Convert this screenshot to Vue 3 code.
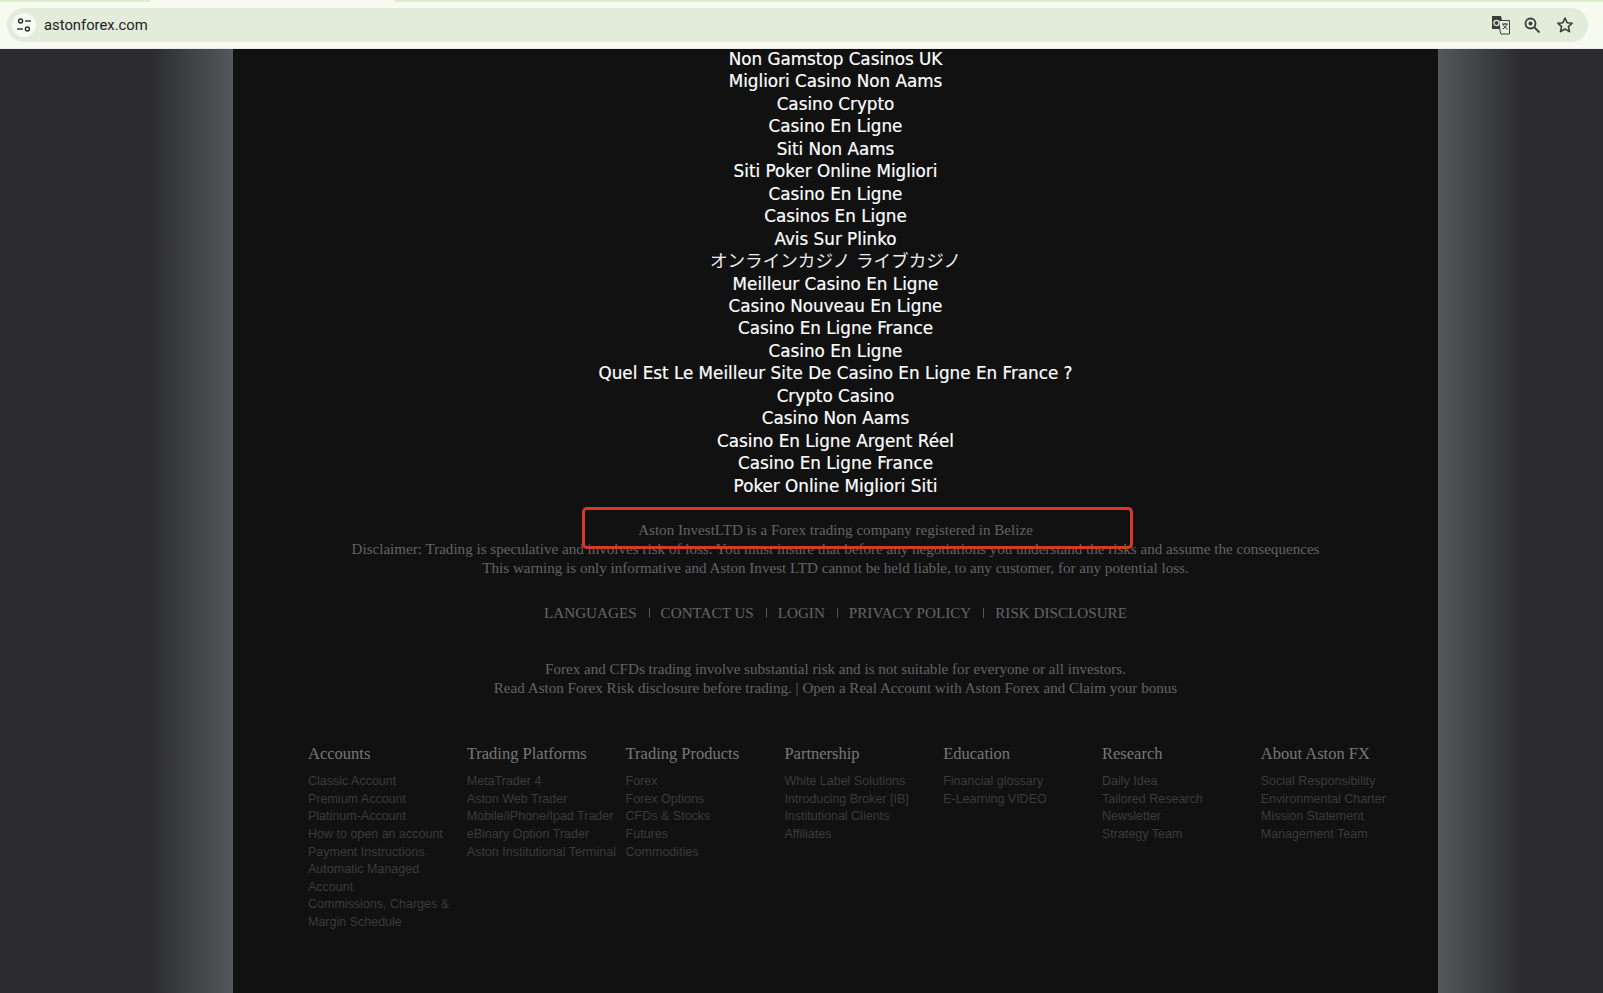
<script setup>
const casinoLinks = [
  'Non Gamstop Casinos UK',
  'Migliori Casino Non Aams',
  'Casino Crypto',
  'Casino En Ligne',
  'Siti Non Aams',
  'Siti Poker Online Migliori',
  'Casino En Ligne',
  'Casinos En Ligne',
  'Avis Sur Plinko',
  'オンラインカジノ ライブカジノ',
  'Meilleur Casino En Ligne',
  'Casino Nouveau En Ligne',
  'Casino En Ligne France',
  'Casino En Ligne',
  'Quel Est Le Meilleur Site De Casino En Ligne En France ?',
  'Crypto Casino',
  'Casino Non Aams',
  'Casino En Ligne Argent Réel',
  'Casino En Ligne France',
  'Poker Online Migliori Siti',
]

const navLinks = ['LANGUAGES', 'CONTACT US', 'LOGIN', 'PRIVACY POLICY', 'RISK DISCLOSURE']

const columns = [
  {
    title: 'Accounts',
    items: [
      'Classic Account',
      'Premium Account',
      'Platinum-Account',
      'How to open an account',
      'Payment Instructions',
      'Automatic Managed Account',
      'Commissions, Charges & Margin Schedule',
    ],
  },
  {
    title: 'Trading Platforms',
    items: [
      'MetaTrader 4',
      'Aston Web Trader',
      'Mobile/iPhone/Ipad Trader',
      'eBinary Option Trader',
      'Aston Institutional Terminal',
    ],
  },
  {
    title: 'Trading Products',
    items: ['Forex', 'Forex Options', 'CFDs & Stocks', 'Futures', 'Commodities'],
  },
  {
    title: 'Partnership',
    items: ['White Label Solutions', 'Introducing Broker [IB]', 'Institutional Clients', 'Affiliates'],
  },
  {
    title: 'Education',
    items: ['Financial glossary', 'E-Learning VIDEO'],
  },
  {
    title: 'Research',
    items: ['Daily Idea', 'Tailored Research', 'Newsletter', 'Strategy Team'],
  },
  {
    title: 'About Aston FX',
    items: ['Social Responsibility', 'Environmental Charter', 'Mission Statement', 'Management Team'],
  },
]
</script>

<template>
  <div class="screen">
    <header class="chrome">
      <div class="tab-strip"></div>
      <div class="omnibox">
        <span class="site-btn">
          <svg width="16" height="16" viewBox="0 0 16 16" fill="none" stroke="#2b2f2b" stroke-width="1.4">
            <circle cx="4.6" cy="4" r="2" />
            <path d="M9 4h6" />
            <path d="M1 12h6" />
            <circle cx="11.4" cy="12" r="2" />
          </svg>
        </span>
        <span class="url">astonforex.com</span>
        <span class="actions">
          <svg width="20" height="20" viewBox="0 0 20 20">
            <path d="M1 1h9l1 4 1 9H1z" fill="#3b3f3b" />
            <path d="M8 5.500h10.500v13.500H10l-1-3z" fill="#e8ede0" stroke="#3b3f3b" stroke-width="1" />
            <circle cx="5.500" cy="8" r="2.600" fill="none" stroke="#e8ede0" stroke-width="1.300" />
            <path d="M11 9h6M14 8v1.500M12 9c.6 2.400 2.600 4 4.600 5M16 9c-.6 2.400-2.400 4-4.400 5" fill="none" stroke="#3b3f3b" stroke-width="1" />
          </svg>
          <svg class="zoom-icon" width="18" height="18" viewBox="0 0 18 18" fill="none" stroke="#3b3f3b">
            <circle cx="7.500" cy="7.500" r="5" stroke-width="1.800" />
            <circle cx="7.500" cy="7.500" r="2" fill="#3b3f3b" stroke="none" />
            <path d="M11.500 11.500l5 5" stroke-width="1.800" />
          </svg>
          <svg width="18" height="18" viewBox="0 0 18 18" fill="none" stroke="#3b3f3b" stroke-width="1.600">
            <path d="M9 2l2.100 4.700 5.100.5-3.800 3.400 1.100 5L9 13l-4.500 2.600 1.100-5L1.800 7.200l5.100-.5z" stroke-linejoin="round" />
          </svg>
        </span>
      </div>
    </header>

    <main class="page">
      <section class="panel">
        <ul class="casino-links">
          <li v-for="(link, i) in casinoLinks" :key="i" :class="{ ja: i === 9 }">{{ link }}</li>
        </ul>

        <div class="legal">
          <span class="highlight"></span>
          <p>Aston InvestLTD is a Forex trading company registered in Belize</p>
          <p>Disclaimer: Trading is speculative and involves risk of loss. You must insure that before any negotiations you understand the risks and assume the consequences</p>
          <p>This warning is only informative and Aston Invest LTD cannot be held liable, to any customer, for any potential loss.</p>
        </div>

        <nav class="nav-links">
          <a v-for="link in navLinks" :key="link">{{ link }}</a>
        </nav>

        <div class="risk">
          <p>Forex and CFDs trading involve substantial risk and is not suitable for everyone or all investors.</p>
          <p>Read Aston Forex Risk disclosure before trading. | Open a Real Account with Aston Forex and Claim your bonus</p>
        </div>

        <div class="sitemap">
          <div v-for="col in columns" :key="col.title" class="sitemap-col">
            <h4>{{ col.title }}</h4>
            <a v-for="item in col.items" :key="item">{{ item }}</a>
          </div>
        </div>
      </section>
    </main>
  </div>
</template>

<style scoped>
.screen {
  height: 993px;
  display: flex;
  flex-direction: column;
  overflow: hidden;
}

.chrome {
  height: 49px;
  flex: none;
  background: #f6faef;
  border-bottom: 1px solid #e9ece6;
  box-sizing: border-box;
}

.tab-strip {
  height: 2px;
  background: linear-gradient(to right, #dcebcf 0 150px, #f6faef 150px 395px, #dcebcf 395px);
}

.omnibox {
  height: 34px;
  margin: 6px 15px 0 7px;
  padding: 0 14.500px 0 5px;
  display: flex;
  align-items: center;
  background: #e3ebdb;
  border-radius: 17px;
}

.site-btn {
  width: 24px;
  height: 24px;
  border-radius: 50%;
  background: #f6faef;
  display: flex;
  align-items: center;
  justify-content: center;
}

.url {
  margin-left: 8px;
  font: 14.800px "Roboto", "Liberation Sans", sans-serif;
  color: #1f231f;
}

.actions {
  margin-left: auto;
  display: flex;
  align-items: center;
  gap: 14px;
}

.zoom-icon {
  margin-left: -2px;
  margin-right: 0.500px;
}

.page {
  flex: 1;
  min-height: 0;
  padding-left: 233px;
  background: linear-gradient(to right, #2c2c30 0 150px, #55575a 233px, #55575a 1438px, #2c2c30 1522px);
}

.panel {
  display: flow-root;
  width: 1205px;
  height: 100%;
  background: #111;
  text-align: center;
}

.casino-links {
  list-style: none;
  margin: -1px 0 0;
  padding: 0;
  font: 16.800px/22.450px "DejaVu Sans", "Noto Sans CJK JP", sans-serif;
  color: #fff;
  -webkit-text-stroke: 0.2px #fff;
}

.casino-links .ja {
  font-size: 17.600px;
  -webkit-text-stroke: 0;
  color: #eee;
}

.legal {
  position: relative;
  margin-top: 24px;
  font: 15.100px/19px "Liberation Serif", serif;
  color: #636366;
}

.legal p,
.risk p {
  margin: 0;
}

.highlight {
  position: absolute;
  left: 349px;
  top: -14px;
  width: 551px;
  height: 42px;
  border: 3px solid #d63a26;
  border-radius: 5px;
  box-sizing: border-box;
}

.nav-links {
  margin-top: 25px;
  display: flex;
  justify-content: center;
  font: 15.150px/19px "Liberation Serif", serif;
  color: #656568;
}

.nav-links a {
  padding: 0 12px;
  position: relative;
}

.nav-links a + a::before {
  content: "";
  position: absolute;
  left: 0;
  top: 5px;
  height: 10px;
  width: 1px;
  background: #55555a;
}

.risk {
  margin-top: 38px;
  font: 15.100px/19px "Liberation Serif", serif;
  color: #636366;
}

.sitemap {
  margin-top: 46px;
  padding-left: 75px;
  display: grid;
  grid-template-columns: repeat(7, 158.800px);
  text-align: left;
}

.sitemap-col {
  padding-right: 6px;
  display: flex;
  flex-direction: column;
  font: 12.500px/17.550px "Liberation Sans", sans-serif;
  color: #3b3b3d;
}

.sitemap-col h4 {
  margin: 0 0 9.300px;
  font: 400 16.500px/20px "Liberation Serif", serif;
  color: #77777a;
}
</style>

<style>
html, body {
  margin: 0;
  background: #111;
}
</style>
